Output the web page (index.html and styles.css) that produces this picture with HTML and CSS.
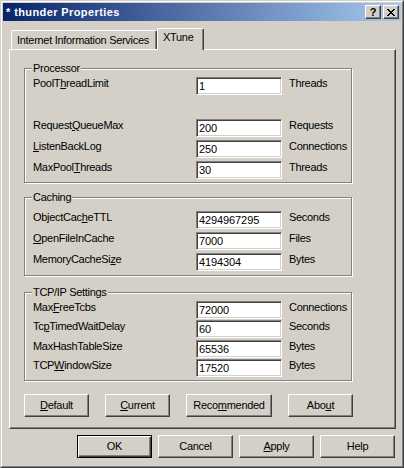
FILE: index.html
```html
<!DOCTYPE html>
<html>
<head>
<meta charset="utf-8">
<title>thunder Properties</title>
<link rel="stylesheet" href="styles.css">
</head>
<body>
<div class="window">
  <div class="frame">
    <div class="titlebar">
      <span class="title">* thunder Properties</span>
      <div class="tbtns">
        <span class="tbtn help">?</span>
        <span class="tbtn close"><svg width="8" height="7" viewBox="0 0 8 7" shape-rendering="crispEdges"><path fill="#000" d="M0 0h2v1H0zM6 0h2v1H6zM1 1h2v1H1zM5 1h2v1H5zM2 2h4v1H2zM3 3h2v1H3zM2 4h4v1H2zM1 5h2v1H1zM5 5h2v1H5zM0 6h2v1H0zM6 6h2v1H6z"/></svg></span>
      </div>
    </div>

    <div class="tabs">
      <div class="tab">Internet Information Services</div>
      <div class="tab active">XTune</div>
    </div>

    <div class="panel">
      <fieldset class="group g-proc">
        <legend>Processor</legend>
        <div class="row"><span class="lbl">PoolT<u>h</u>readLimit</span><span class="edit">1</span><span class="unit">Threads</span></div>
        <div class="row empty"></div>
        <div class="row"><span class="lbl">Request<u>Q</u>ueueMax</span><span class="edit">200</span><span class="unit">Requests</span></div>
        <div class="row"><span class="lbl"><u>L</u>istenBackLog</span><span class="edit">250</span><span class="unit">Connections</span></div>
        <div class="row"><span class="lbl">MaxPool<u>T</u>hreads</span><span class="edit">30</span><span class="unit">Threads</span></div>
      </fieldset>

      <fieldset class="group g-cache">
        <legend>Caching</legend>
        <div class="row"><span class="lbl">ObjectCac<u>h</u>eTTL</span><span class="edit">4294967295</span><span class="unit">Seconds</span></div>
        <div class="row"><span class="lbl"><u>O</u>penFileInCache</span><span class="edit">7000</span><span class="unit">Files</span></div>
        <div class="row"><span class="lbl">MemoryCacheSi<u>z</u>e</span><span class="edit">4194304</span><span class="unit">Bytes</span></div>
      </fieldset>

      <fieldset class="group g-tcp">
        <legend>TCP/IP Settings</legend>
        <div class="row"><span class="lbl">Max<u>F</u>reeTcbs</span><span class="edit">72000</span><span class="unit">Connections</span></div>
        <div class="row"><span class="lbl">Tc<u>p</u>TimedWaitDelay</span><span class="edit">60</span><span class="unit">Seconds</span></div>
        <div class="row"><span class="lbl">MaxHashTableSize</span><span class="edit">65536</span><span class="unit">Bytes</span></div>
        <div class="row"><span class="lbl">TCP<u>W</u>indowSize</span><span class="edit">17520</span><span class="unit">Bytes</span></div>
      </fieldset>

      <div class="pbtns">
        <span class="btn w65"><u>D</u>efault</span>
        <span class="btn w65"><u>C</u>urrent</span>
        <span class="btn w86">Reco<u>m</u>mended</span>
        <span class="btn w65">Abo<u>u</u>t</span>
      </div>
    </div>

    <div class="dbtns">
      <span class="btn w75 default">OK</span>
      <span class="btn w75">Cancel</span>
      <span class="btn w75"><u>A</u>pply</span>
      <span class="btn w75">Help</span>
    </div>
  </div>
</div>
</body>
</html>
```

FILE: styles.css
```css
* { box-sizing: border-box; }
html, body { margin: 0; padding: 0; }
body {
  background: #D4D0C8;
  font-family: "Liberation Sans", Arial, sans-serif;
  font-size: 11px;
  letter-spacing: -0.3px;
  color: #000;
}
u { text-decoration: underline; text-underline-offset: 1px; }

.window {
  width: 404px;
  height: 468px;
  background: #D4D0C8;
  border: 1px solid;
  border-color: #D4D0C8 #404040 #404040 #D4D0C8;
}
.frame {
  height: 100%;
  border: 1px solid;
  border-color: #FFFFFF #808080 #808080 #FFFFFF;
  padding: 1px;
  display: flex;
  flex-direction: column;
}

/* Title bar */
.titlebar {
  height: 18px;
  flex: none;
  background: linear-gradient(to right, #0A246A, #A6CAF0);
  display: flex;
  align-items: center;
  justify-content: space-between;
  padding: 0 2px 0 3px;
}
.title {
  color: #fff;
  font-weight: bold;
  font-size: 11px;
  letter-spacing: 0.4px;
  line-height: 18px;
}
.tbtns { display: flex; gap: 2px; }
.tbtn {
  width: 16px;
  height: 14px;
  background: #D4D0C8;
  border: 1px solid;
  border-color: #FFFFFF #404040 #404040 #FFFFFF;
  box-shadow: inset -1px -1px 0 #808080;
  display: flex;
  align-items: center;
  justify-content: center;
}
.tbtn.help {
  font-weight: bold;
  font-size: 11px;
  line-height: 12px;
  letter-spacing: 0;
}
.tbtn svg { display: block; margin-top: 1px; }

/* Tabs */
.tabs {
  flex: none;
  height: 21px;
  margin: 7px 0 0 8px;
  display: flex;
  align-items: flex-end;
  position: relative;
  z-index: 1;
}
.tab {
  height: 19px;
  width: 146px;
  padding: 3px 0 0 5px;
  line-height: 13px;
  background: #D4D0C8;
  border-top: 1px solid #FFFFFF;
  border-left: 1px solid #FFFFFF;
  border-right: 1px solid #404040;
  box-shadow: inset -1px 0 0 #808080;
  border-radius: 2px 2px 0 0;
  white-space: nowrap;
}
.tab.active {
  width: 47px;
  height: 22px;
  margin-bottom: -1px;
  padding-top: 2px;
}

/* Panel */
.panel {
  flex: none;
  margin-left: 6px;
  width: 387px;
  height: 380px;
  border: 1px solid;
  border-color: #FFFFFF #404040 #404040 #FFFFFF;
  box-shadow: inset -1px -1px 0 #808080;
  padding: 12px 0 0 14px;
}

.group {
  margin: 0;
  width: 328px;
  min-inline-size: 0;
  border: 1px solid #808080;
  box-shadow: 1px 1px 0 #FFFFFF, inset 1px 1px 0 #FFFFFF;
  padding: 2px 0 3px 8px;
}
.group legend {
  padding: 0 1px;
  margin-left: -1px;
  line-height: 13px;
  background: #D4D0C8;
}
.g-cache { margin-top: 8px; padding-top: 7px; padding-bottom: 4px; }
.g-tcp { margin-top: 10px; padding-top: 2px; padding-bottom: 3px; }

.row {
  display: grid;
  grid-template-columns: 163px 86px auto;
  align-items: start;
  height: 18px;
}
.row + .row { margin-top: 3px; }
.g-tcp .row + .row { margin-top: 1px; }
.g-tcp .row:nth-of-type(3) { margin-top: 2px; }
.lbl, .unit { line-height: 13px; white-space: nowrap; }
.unit { padding-left: 7px; }
.edit {
  height: 18px;
  background: #FFFFFF;
  border: 1px solid;
  border-color: #808080 #FFFFFF #FFFFFF #808080;
  box-shadow: inset 1px 1px 0 #404040, inset -1px -1px 0 #D4D0C8;
  padding-left: 2px;
  line-height: 16px;
  letter-spacing: -0.1px;
  white-space: nowrap;
}

/* Buttons */
.btn {
  height: 23px;
  border: 1px solid;
  border-color: #FFFFFF #404040 #404040 #FFFFFF;
  box-shadow: inset -1px -1px 0 #808080;
  display: flex;
  align-items: center;
  justify-content: center;
  line-height: 13px;
  white-space: nowrap;
}
.btn.default {
  border-color: #000;
  box-shadow: inset 1px 1px 0 #FFFFFF, inset -1px -1px 0 #404040, inset -2px -2px 0 #808080;
}
.w65 { width: 65px; }
.w75 { width: 75px; }
.w86 { width: 86px; }

.pbtns {
  display: flex;
  gap: 16px;
  margin-top: 13px;
}
.dbtns {
  flex: none;
  display: flex;
  justify-content: flex-end;
  gap: 6px;
  margin-top: 6px;
  padding-right: 6px;
}
```
